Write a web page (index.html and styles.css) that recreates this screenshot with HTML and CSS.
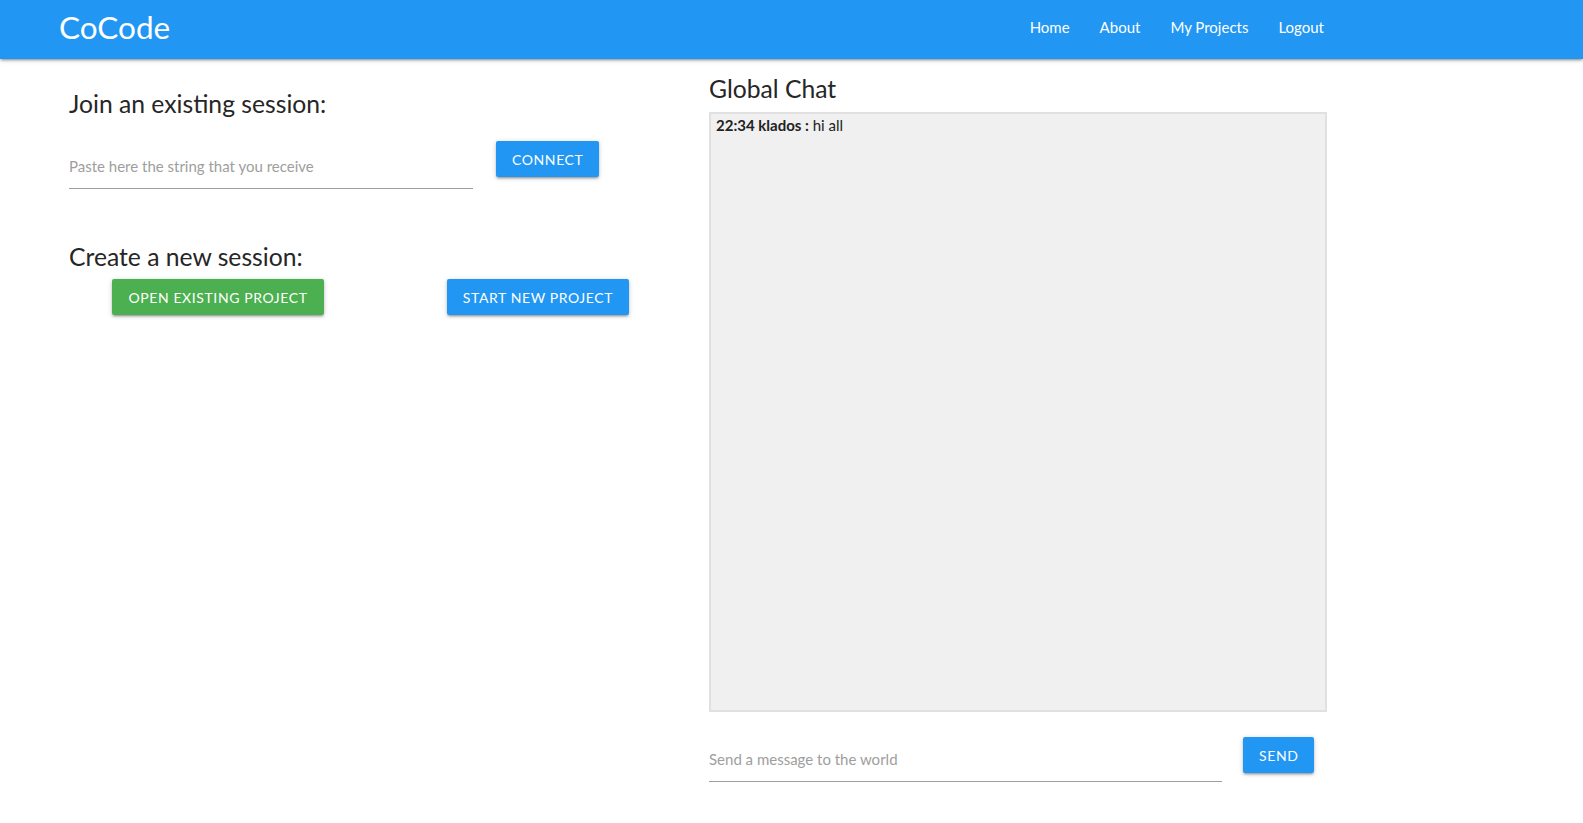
FILE: index.html
```html
<!DOCTYPE html>
<html lang="en">
<head>
<meta charset="utf-8">
<title>CoCode</title>
<link rel="stylesheet" href="styles.css">
</head>
<body>
<nav class="navbar">
  <a class="brand" href="#">CoCode</a>
  <ul class="nav-links">
    <li><a href="#">Home</a></li>
    <li><a href="#">About</a></li>
    <li><a href="#">My Projects</a></li>
    <li><a href="#">Logout</a></li>
  </ul>
</nav>
<main class="page">
  <section class="left">
    <h5 class="heading join-heading">Join an existing session:</h5>
    <div class="join-row">
      <input class="line-input join-input" type="text" placeholder="Paste here the string that you receive">
      <button class="btn btn-blue connect-btn">Connect</button>
    </div>
    <h5 class="heading create-heading">Create a new session:</h5>
    <div class="create-row">
      <div class="cell"><button class="btn btn-green">Open existing project</button></div>
      <div class="cell"><button class="btn btn-blue">Start new project</button></div>
    </div>
  </section>
  <section class="right">
    <h5 class="heading chat-heading">Global Chat</h5>
    <div class="chat-box">
      <div class="msg"><b>22:34 klados :</b> hi all</div>
    </div>
    <div class="send-row">
      <input class="line-input send-input" type="text" placeholder="Send a message to the world">
      <button class="btn btn-blue send-btn">Send</button>
    </div>
  </section>
</main>
</body>
</html>
```
FILE: styles.css
```css
* { box-sizing: border-box; }
html, body { margin: 0; padding: 0; }
body {
  font-family: Lato, "Liberation Sans", sans-serif;
  color: rgba(0,0,0,0.87);
  background: #fff;
}
.navbar {
  height: 59px;
  background: #2196F3;
  display: flex;
  align-items: flex-start;
  padding-left: 59px;
  box-shadow: 0 2px 2px 0 rgba(0,0,0,0.14), 0 3px 1px -2px rgba(0,0,0,0.12), 0 1px 5px 0 rgba(0,0,0,0.2);
  position: relative;
}
.brand {
  color: #fff;
  text-decoration: none;
  font-size: 31.5px;
  line-height: 54px;
}
.nav-links {
  list-style: none;
  margin: 0 244px 0 auto;
  padding: 0;
  display: flex;
}
.nav-links a {
  display: block;
  padding: 0 15px;
  color: #fff;
  text-decoration: none;
  font-size: 15px;
  line-height: 54px;
}
.page {
  display: grid;
  grid-template-columns: 651px 618px;
  padding-left: 58px;
}
.heading {
  font-weight: 400;
  font-size: 24.7px;
  margin: 0;
  line-height: 30px;
  color: #262626;
}
.join-heading { margin: 30px 0 0 11px; }
.join-row {
  display: flex;
  align-items: flex-start;
  margin: 25px 0 0 11px;
}
.line-input {
  border: none;
  border-bottom: 1px solid #9e9e9e;
  outline: none;
  background: transparent;
  font-family: inherit;
  font-size: 15px;
  color: #333;
  padding: 0;
  height: 45px;
}
.line-input::placeholder { color: #9e9e9e; }
.join-input { width: 404px; }
.btn {
  border: none;
  border-radius: 2px;
  color: #fff;
  font-family: inherit;
  font-size: 14px;
  letter-spacing: 0.6px;
  text-transform: uppercase;
  height: 36px;
  padding: 0 16px;
  box-shadow: 0 2px 2px 0 rgba(0,0,0,0.14), 0 3px 1px -2px rgba(0,0,0,0.12), 0 1px 5px 0 rgba(0,0,0,0.2);
  cursor: pointer;
}
.btn-blue { background: #2196F3; }
.btn-green { background: #4CAF50; }
.connect-btn { margin-left: 23px; margin-top: -3px; }
.create-heading { margin: 53px 0 0 11px; }
.create-row {
  display: grid;
  grid-template-columns: 320px 320px;
  margin-top: 7px;
}
.cell { display: flex; justify-content: center; }
.right { display: flex; flex-direction: column; }
.chat-heading { margin: 15px 0 0 0; }
.chat-box {
  margin-top: 8px;
  height: 600px;
  border: 2px solid #e0e0e0;
  background: #f0f0f0;
  padding: 1px 5px;
}
.msg { font-size: 15px; color: #222; line-height: 20px; }
.msg b { font-weight: 700; }
.send-row {
  display: flex;
  align-items: flex-start;
  margin-top: 25px;
}
.send-input { width: 513px; }
.send-btn { margin-left: 21px; }
```
